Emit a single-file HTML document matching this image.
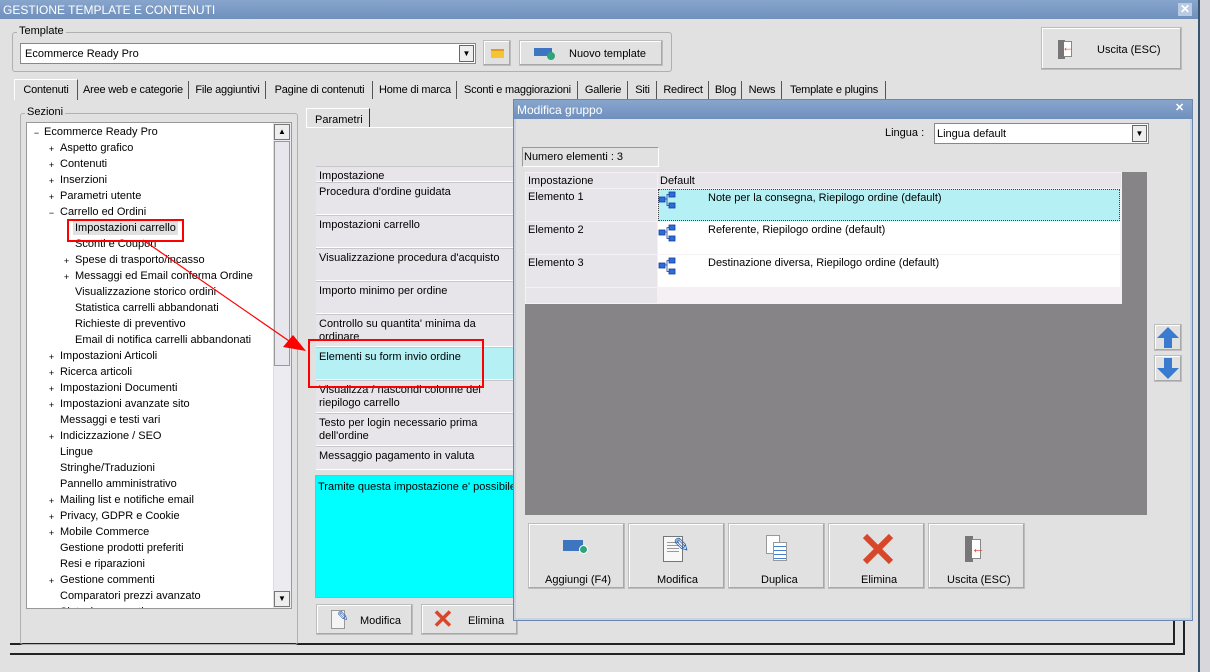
<!DOCTYPE html>
<html><head><meta charset="utf-8"><style>
*{box-sizing:border-box;margin:0;padding:0}
body{width:1210px;height:672px;overflow:hidden;background:#e1e1e1;font-family:"Liberation Sans",sans-serif;font-size:11px;color:#000;position:relative}
.a{position:absolute}
.btn{position:absolute;background:#e1e1e1;border:1px solid #bdbdbd;box-shadow:inset -1px -1px 0 #a8a8a8,inset 1px 1px 0 #fff}
.title{background:linear-gradient(#88a6cc,#6f8fbd);color:#fff;font-size:13px;}
.tab{position:absolute;top:81px;height:18px;border-right:1px solid #555;padding:3px 0 0 0;white-space:nowrap;text-align:center;overflow:hidden;letter-spacing:-0.2px}
.tree div{position:absolute;white-space:nowrap}
.pm{position:absolute;width:7px;height:7px;font-size:9px;line-height:7px;text-align:center}
.row{position:absolute;left:316px;width:200px;border-bottom:1px solid #fff;background:#e8e5ea;padding:3px 3px 0 3px;line-height:13px;border-top:1px solid #c9c6cb}
</style></head><body>
<div class="a title" style="left:0;top:0;width:1198px;height:19px;padding:3px 0 0 3px;font-size:12px">GESTIONE TEMPLATE E CONTENUTI</div>
<div class="a" style="left:1178px;top:3px;width:14px;height:13px;background:#b9cbe3;color:#fff;font-weight:bold;font-size:12px;text-align:center;line-height:13px">✕</div>
<div class="a" style="left:1198px;top:0;width:2px;height:672px;background:#39546f"></div>
<div class="a" style="left:1200px;top:0;width:10px;height:672px;background:#d8d8dc"></div>
<div class="a" style="left:12px;top:32px;width:660px;height:40px;border:1px solid #b0b0b0;border-radius:3px"></div>
<div class="a" style="left:17px;top:25px;background:#e1e1e1;padding:0 2px">Template</div>
<div class="a" style="left:20px;top:43px;width:456px;height:21px;background:#fff;border:1px solid #888;padding:4px 4px">Ecommerce Ready Pro</div>
<div class="a" style="left:459px;top:45px;width:15px;height:17px;background:#eee;border:1px solid #666;font-size:8px;text-align:center;line-height:16px">▼</div>
<div class="btn" style="left:483px;top:40px;width:28px;height:26px"><div class="a" style="left:7px;top:8px;width:13px;height:9px;background:#f5c433;border-top:2px solid #e59c14"></div></div>
<div class="btn" style="left:519px;top:40px;width:144px;height:26px"><div class="a" style="left:14px;top:7px;width:18px;height:8px;background:#3d75c0"></div><div class="a" style="left:27px;top:11px;width:8px;height:8px;border-radius:50%;background:#2fa37a"></div><div class="a" style="left:49px;top:7px">Nuovo template</div></div>
<div class="btn" style="left:1041px;top:27px;width:141px;height:43px"><div class="a" style="left:16px;top:12px;width:7px;height:19px;background:#777"></div><div class="a" style="left:22px;top:13px;width:8px;height:16px;border:1px solid #888;border-left:none;background:#fff"></div><div class="a" style="left:20px;top:12px;color:#e03a2a;font-size:12px;font-weight:bold">←</div><div class="a" style="left:55px;top:16px">Uscita (ESC)</div></div>
<div class="a" style="left:14px;top:79px;width:64px;height:21px;background:#e1e1e1;border:1px solid #fff;border-bottom:none;border-right:1px solid #555"></div>
<div class="tab" style="left:15px;width:62px;border:none">Contenuti</div>
<div class="tab" style="left:78px;width:111px">Aree web e categorie</div>
<div class="tab" style="left:190px;width:76px">File aggiuntivi</div>
<div class="tab" style="left:267px;width:106px">Pagine di contenuti</div>
<div class="tab" style="left:374px;width:83px">Home di marca</div>
<div class="tab" style="left:458px;width:120px">Sconti e maggiorazioni</div>
<div class="tab" style="left:579px;width:49px">Gallerie</div>
<div class="tab" style="left:629px;width:28px">Siti</div>
<div class="tab" style="left:658px;width:51px">Redirect</div>
<div class="tab" style="left:710px;width:32px">Blog</div>
<div class="tab" style="left:743px;width:39px">News</div>
<div class="tab" style="left:783px;width:103px">Template e plugins</div>
<div class="a" style="left:10px;top:99px;width:1175px;height:556px;border-right:2px solid #222;border-bottom:2px solid #222"></div>
<div class="a" style="left:10px;top:99px;width:1165px;height:546px;border-right:2px solid #222;border-bottom:2px solid #222"></div>
<div class="a" style="left:20px;top:113px;width:278px;height:532px;border:1px solid #b0b0b0;border-radius:3px"></div>
<div class="a" style="left:25px;top:106px;background:#e1e1e1;padding:0 2px">Sezioni</div>
<div class="a tree" style="left:26px;top:122px;width:266px;height:487px;background:#fff;border:1px solid #999;overflow:hidden">
<div style="left:17px;top:3px">Ecommerce Ready Pro</div><div class="pm" style="left:6px;top:7px">−</div>
<div style="left:33px;top:19px">Aspetto grafico</div><div class="pm" style="left:21px;top:23px">+</div>
<div style="left:33px;top:35px">Contenuti</div><div class="pm" style="left:21px;top:39px">+</div>
<div style="left:33px;top:51px">Inserzioni</div><div class="pm" style="left:21px;top:55px">+</div>
<div style="left:33px;top:67px">Parametri utente</div><div class="pm" style="left:21px;top:71px">+</div>
<div style="left:33px;top:83px">Carrello ed Ordini</div><div class="pm" style="left:21px;top:87px">−</div>
<div style="left:46px;top:98px;background:#e1e1e1;padding:1px 2px">Impostazioni carrello</div>
<div style="left:48px;top:115px">Sconti e Coupon</div>
<div style="left:48px;top:131px">Spese di trasporto/incasso</div><div class="pm" style="left:36px;top:135px">+</div>
<div style="left:48px;top:147px">Messaggi ed Email conferma Ordine</div><div class="pm" style="left:36px;top:151px">+</div>
<div style="left:48px;top:163px">Visualizzazione storico ordini</div>
<div style="left:48px;top:179px">Statistica carrelli abbandonati</div>
<div style="left:48px;top:195px">Richieste di preventivo</div>
<div style="left:48px;top:211px">Email di notifica carrelli abbandonati</div>
<div style="left:33px;top:227px">Impostazioni Articoli</div><div class="pm" style="left:21px;top:231px">+</div>
<div style="left:33px;top:243px">Ricerca articoli</div><div class="pm" style="left:21px;top:247px">+</div>
<div style="left:33px;top:259px">Impostazioni Documenti</div><div class="pm" style="left:21px;top:263px">+</div>
<div style="left:33px;top:275px">Impostazioni avanzate sito</div><div class="pm" style="left:21px;top:279px">+</div>
<div style="left:33px;top:291px">Messaggi e testi vari</div>
<div style="left:33px;top:307px">Indicizzazione / SEO</div><div class="pm" style="left:21px;top:311px">+</div>
<div style="left:33px;top:323px">Lingue</div>
<div style="left:33px;top:339px">Stringhe/Traduzioni</div>
<div style="left:33px;top:355px">Pannello amministrativo</div>
<div style="left:33px;top:371px">Mailing list e notifiche email</div><div class="pm" style="left:21px;top:375px">+</div>
<div style="left:33px;top:387px">Privacy, GDPR e Cookie</div><div class="pm" style="left:21px;top:391px">+</div>
<div style="left:33px;top:403px">Mobile Commerce</div><div class="pm" style="left:21px;top:407px">+</div>
<div style="left:33px;top:419px">Gestione prodotti preferiti</div>
<div style="left:33px;top:435px">Resi e riparazioni</div>
<div style="left:33px;top:451px">Gestione commenti</div><div class="pm" style="left:21px;top:455px">+</div>
<div style="left:33px;top:467px">Comparatori prezzi avanzato</div>
<div style="left:33px;top:483px">Sintesi commenti</div>
<div style="left:246px;top:0;width:18px;height:485px;background:#ececf0;border-left:1px solid #ddd"></div>
<div style="left:247px;top:1px;width:16px;height:16px;background:#eee;border:1px solid #777;font-size:8px;text-align:center;line-height:14px">▲</div>
<div style="left:247px;top:468px;width:16px;height:16px;background:#eee;border:1px solid #777;font-size:8px;text-align:center;line-height:14px">▼</div>
<div style="left:247px;top:18px;width:16px;height:225px;background:#e6e6ec;border:1px solid #999"></div>
</div>
<div class="a" style="left:306px;top:108px;width:64px;height:20px;border:1px solid #fff;border-right:1px solid #333;border-bottom:none;padding:5px 0 0 8px">Parametri</div>
<div class="a" style="left:306px;top:127px;width:210px;height:1px;background:#fff"></div>
<div class="row" style="top:166px;height:16px">Impostazione</div>
<div class="row" style="top:182px;height:33px">Procedura d'ordine guidata</div>
<div class="row" style="top:215px;height:33px">Impostazioni carrello</div>
<div class="row" style="top:248px;height:33px">Visualizzazione procedura d'acquisto</div>
<div class="row" style="top:281px;height:33px">Importo minimo per ordine</div>
<div class="row" style="top:314px;height:33px">Controllo su quantita' minima da ordinare</div>
<div class="row" style="top:347px;height:33px;background:#b4f0f4">Elementi su form invio ordine</div>
<div class="row" style="top:380px;height:33px">Visualizza / nascondi colonne del riepilogo carrello</div>
<div class="row" style="top:413px;height:33px">Testo per login necessario prima dell'ordine</div>
<div class="row" style="top:446px;height:24px">Messaggio pagamento in valuta</div>
<div class="a" style="left:315px;top:475px;width:200px;height:123px;background:#00ffff;border:1px solid #aaa;padding:5px 2px;white-space:nowrap;overflow:hidden">Tramite questa impostazione e' possibile p</div>
<div class="btn" style="left:316px;top:604px;width:97px;height:31px"><div class="a" style="left:14px;top:5px;width:14px;height:19px;background:#f4f4f4;border:1px solid #999"></div><div class="a" style="left:20px;top:3px;color:#3a6fc0;font-size:14px">✎</div><div class="a" style="left:43px;top:10px">Modifica</div></div>
<div class="btn" style="left:421px;top:604px;width:97px;height:31px"><div class="a" style="left:10px;top:0px;color:#d9472b;font-size:26px;font-weight:bold;line-height:28px">✕</div><div class="a" style="left:46px;top:10px">Elimina</div></div>
<div class="a" style="left:67px;top:219px;width:117px;height:23px;border:2px solid #f00"></div>
<div class="a" style="left:308px;top:339px;width:176px;height:49px;border:2px solid #f00"></div>
<svg class="a" style="left:0;top:0" width="1210" height="672"><line x1="143" y1="240" x2="292" y2="343" stroke="#f00" stroke-width="1.2"/><polygon points="306,351 283,347 293,335" fill="#f00"/></svg>
<div class="a" style="left:513px;top:99px;width:680px;height:522px;background:#e1e1e1;border:1px solid #6a86ac;box-shadow:inset 0 0 0 2px #c8d3e3"></div>
<div class="a title" style="left:514px;top:100px;width:678px;height:19px;padding:3px 0 0 3px;font-size:12px">Modifica gruppo</div>
<div class="a" style="left:1175px;top:103px;width:11px;height:11px;color:#fff;font-weight:bold;font-size:11px;line-height:11px">✕</div>
<div class="a" style="left:885px;top:127px">Lingua :</div>
<div class="a" style="left:934px;top:123px;width:215px;height:21px;background:#fff;border:1px solid #888;padding:4px 2px">Lingua default</div>
<div class="a" style="left:1132px;top:125px;width:15px;height:17px;background:#eee;border:1px solid #666;font-size:8px;text-align:center;line-height:16px">▼</div>
<div class="a" style="left:522px;top:147px;width:137px;height:20px;border:1px solid #999;border-right-color:#fff;border-bottom-color:#fff;padding:3px 1px">Numero elementi : 3</div>
<div class="a" style="left:525px;top:172px;width:622px;height:343px;background:#868486"></div>
<div class="a" style="left:525px;top:172px;width:597px;height:132px;background:#f4f0f4"></div>
<div class="a" style="left:526px;top:173px;width:131px;height:15px;background:#e8e5ea;padding:2px 2px">Impostazione</div>
<div class="a" style="left:658px;top:173px;width:463px;height:15px;background:#e8e5ea;padding:2px 2px">Default</div>
<div class="a" style="left:526px;top:189px;width:131px;height:32px;background:#e8e5ea;padding:2px 2px">Elemento 1</div>
<div class="a" style="left:526px;top:222px;width:131px;height:32px;background:#e8e5ea;padding:2px 2px">Elemento 2</div>
<div class="a" style="left:526px;top:255px;width:131px;height:32px;background:#e8e5ea;padding:2px 2px">Elemento 3</div>
<div class="a" style="left:526px;top:288px;width:131px;height:15px;background:#e8e5ea"></div>
<div class="a" style="left:658px;top:189px;width:462px;height:32px;background:#b4f0f4;border:1px dotted #444;padding:2px 0 0 49px">Note per la consegna, Riepilogo ordine (default)</div>
<div class="a" style="left:658px;top:222px;width:462px;height:32px;background:#fff;padding:2px 0 0 50px">Referente, Riepilogo ordine (default)</div>
<div class="a" style="left:658px;top:255px;width:462px;height:32px;background:#fff;padding:2px 0 0 50px">Destinazione diversa, Riepilogo ordine (default)</div>
<svg class="a" style="left:658px;top:190px" width="26" height="100">
<g id="ic" fill="#2a6fd8" stroke="#1a3a9a" stroke-width=".8"><rect x="1" y="7" width="6" height="5"/><rect x="11" y="2" width="6" height="5"/><rect x="11" y="13" width="6" height="5"/><path d="M7 9 L9 9 L9 4.5 L11 4.5 M9 9 L9 15.5 L11 15.5" fill="none"/></g>
<use href="#ic" y="33"/><use href="#ic" y="66"/></svg>
<div class="btn" style="left:1154px;top:324px;width:28px;height:27px"><svg width="26" height="25"><path d="M13 2 L24 13 L17 13 L17 23 L9 23 L9 13 L2 13 Z" fill="#3a7bd0"/></svg></div>
<div class="btn" style="left:1154px;top:355px;width:28px;height:27px"><svg width="26" height="25"><path d="M13 23 L24 12 L17 12 L17 2 L9 2 L9 12 L2 12 Z" fill="#3a7bd0"/></svg></div>
<div class="btn" style="left:528px;top:523px;width:97px;height:66px"><div class="a" style="left:34px;top:16px;width:20px;height:11px;background:#3d75c0"></div><div class="a" style="left:50px;top:21px;width:9px;height:9px;border-radius:50%;background:#2fa37a;border:1px solid #fff"></div><div class="a" style="left:16px;top:50px">Aggiungi (F4)</div></div>
<div class="btn" style="left:628px;top:523px;width:97px;height:66px"><div class="a" style="left:34px;top:12px;width:20px;height:26px;background:#f8f8f8;border:1px solid #777"></div><div class="a" style="left:38px;top:18px;width:12px;height:12px;background:repeating-linear-gradient(#999 0 1px,transparent 1px 3px)"></div><div class="a" style="left:44px;top:9px;color:#2a68c0;font-size:20px">✎</div><div class="a" style="left:28px;top:50px">Modifica</div></div>
<div class="btn" style="left:728px;top:523px;width:97px;height:66px"><div class="a" style="left:37px;top:11px;width:14px;height:19px;background:#fff;border:1px solid #999"></div><div class="a" style="left:44px;top:18px;width:14px;height:19px;background:repeating-linear-gradient(#fff 0 3px,#4a7fd0 3px 4px);border:1px solid #999"></div><div class="a" style="left:32px;top:50px">Duplica</div></div>
<div class="btn" style="left:828px;top:523px;width:97px;height:66px"><svg class="a" style="left:33px;top:9px" width="32" height="32"><path d="M3 3 L29 29 M29 3 L3 29" stroke="#d9472b" stroke-width="6"/></svg><div class="a" style="left:32px;top:50px">Elimina</div></div>
<div class="btn" style="left:928px;top:523px;width:97px;height:66px"><div class="a" style="left:36px;top:12px;width:8px;height:26px;background:#777"></div><div class="a" style="left:43px;top:15px;width:9px;height:20px;border:1px solid #888;border-left:none;background:#fff"></div><div class="a" style="left:42px;top:16px;color:#e03a2a;font-size:14px;font-weight:bold">←</div><div class="a" style="left:18px;top:50px">Uscita (ESC)</div></div>
</body></html>
